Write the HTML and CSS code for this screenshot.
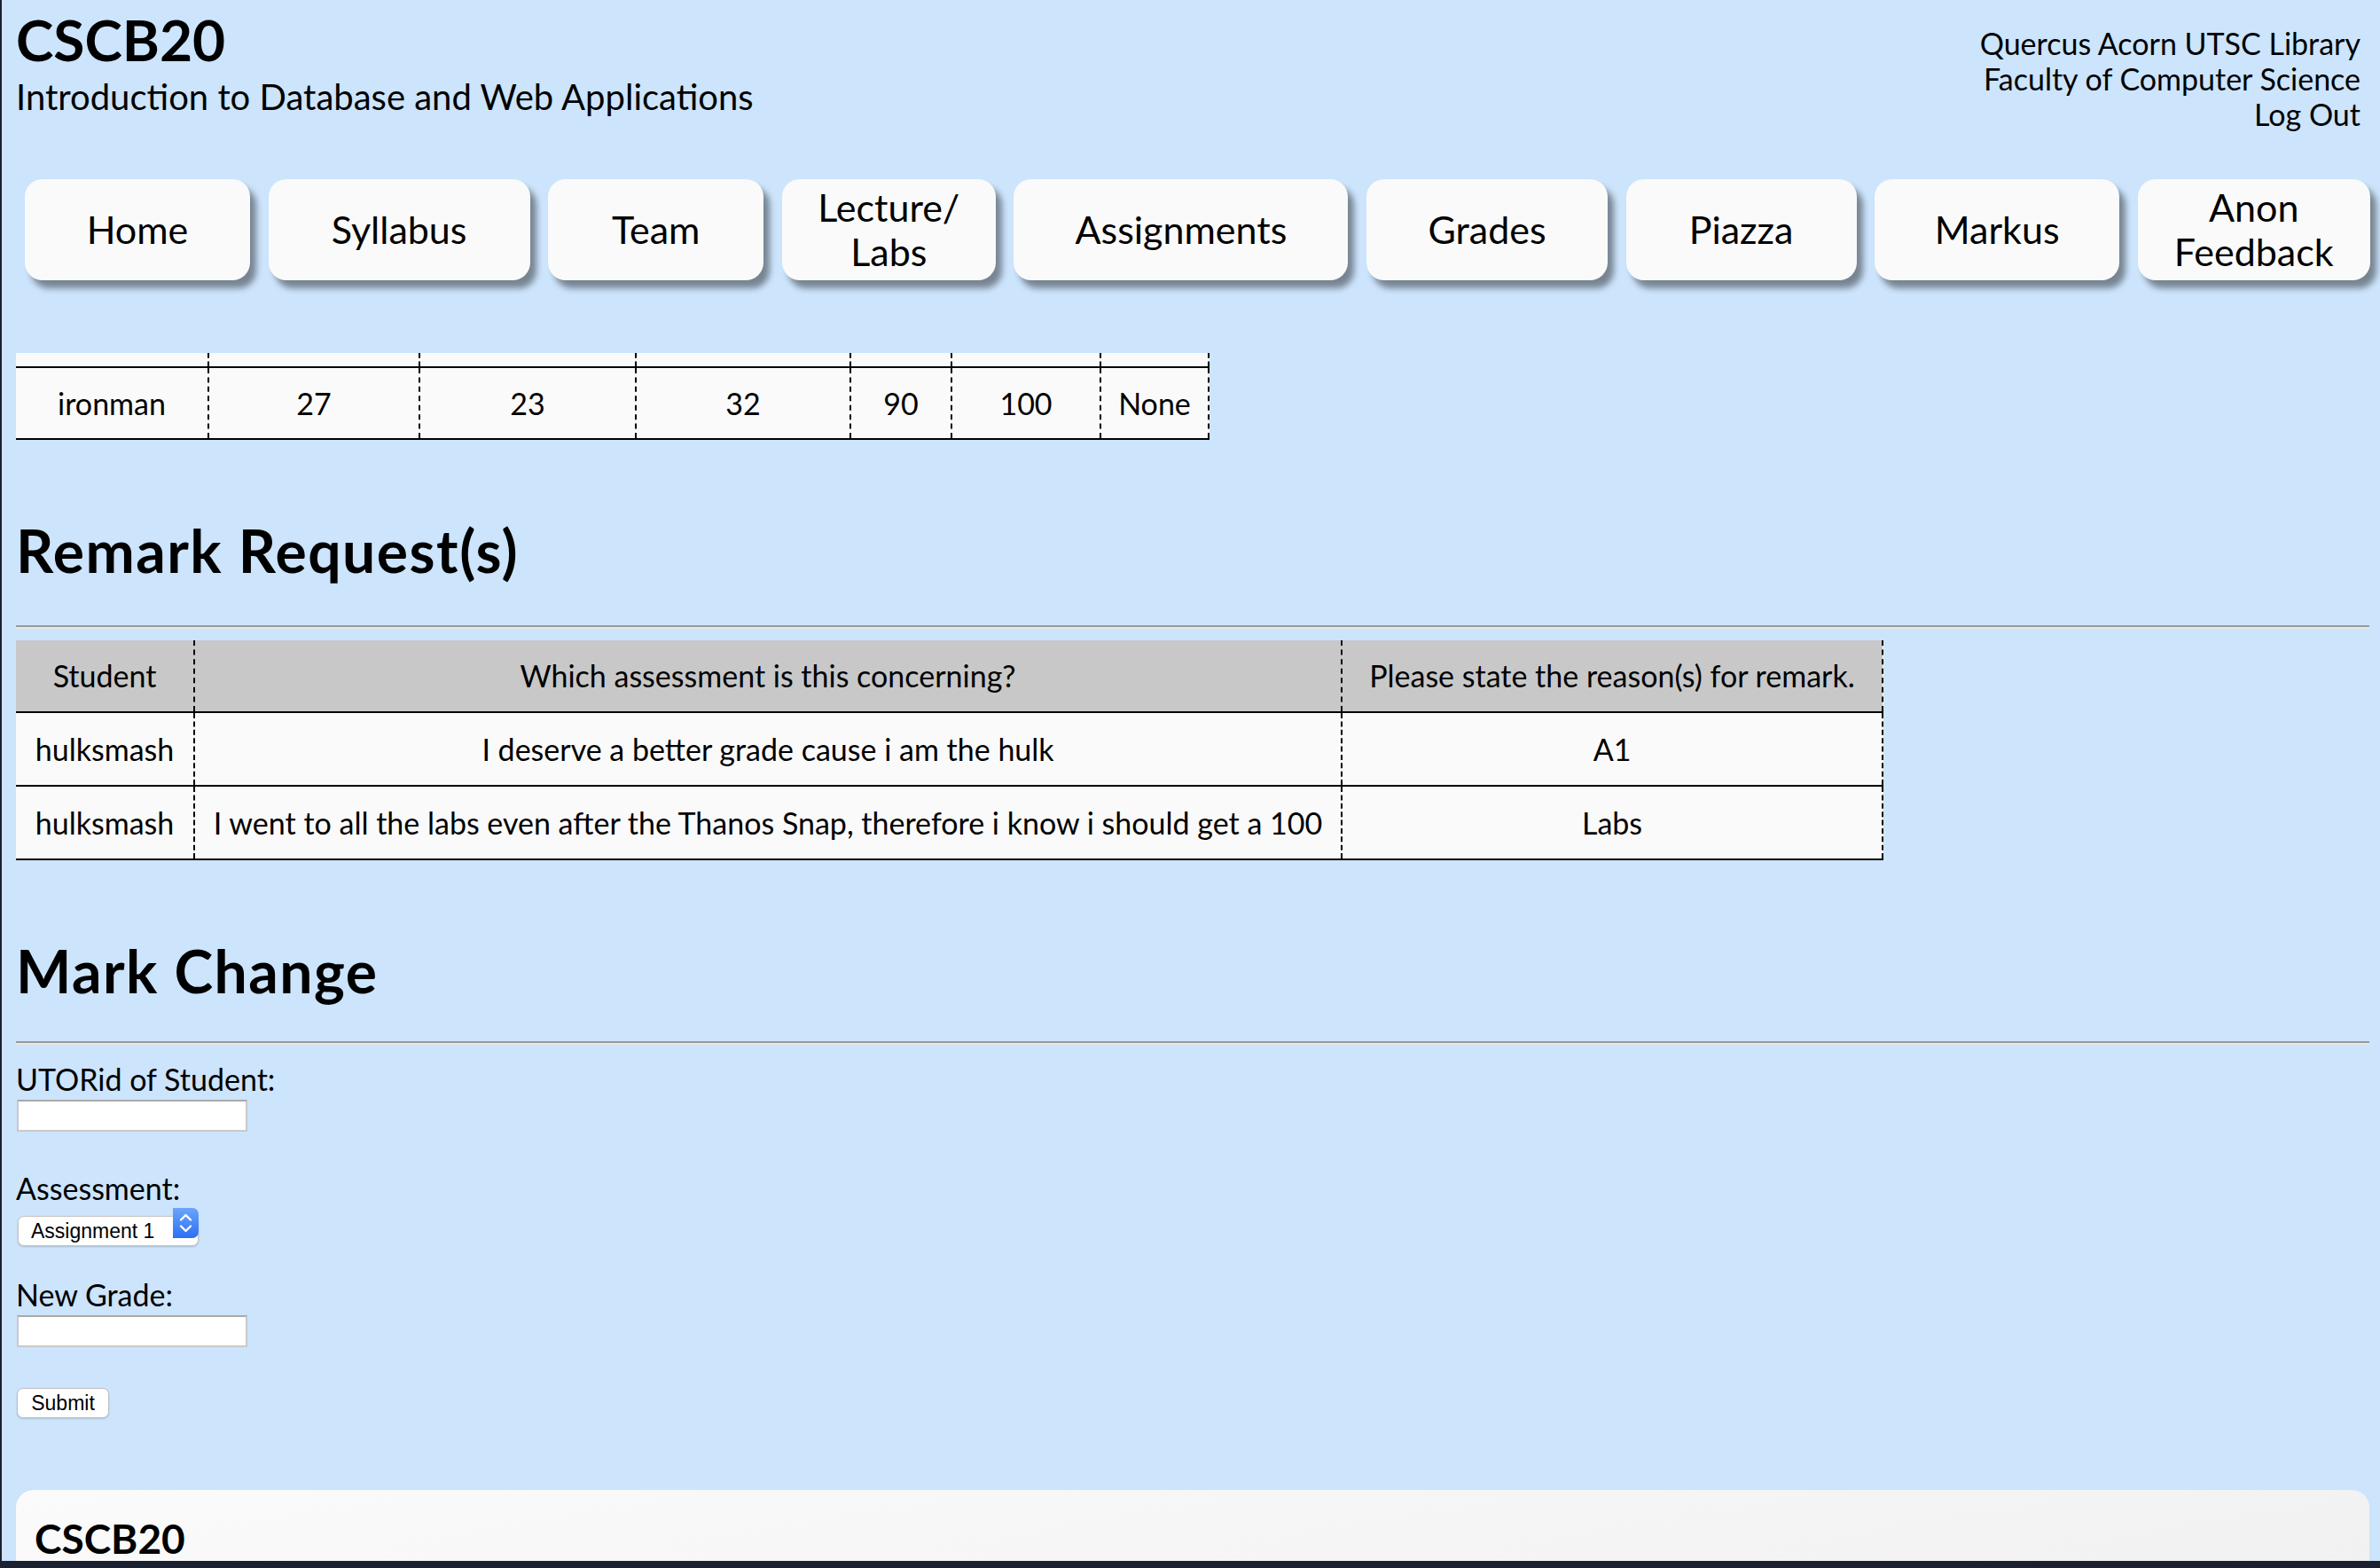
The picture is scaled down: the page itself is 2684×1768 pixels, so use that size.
FILE: index.html
```html
<!DOCTYPE html>
<html lang="en">
<head>
<meta charset="utf-8">
<title>CSCB20 - Grades</title>
<link rel="stylesheet" href="styles.css">
</head>
<body>
<div class="frame"></div>
<header class="top">
  <div class="brand">
    <h1 class="brand-title">CSCB20</h1>
    <p class="subtitle">Introduction to Database and Web Applications</p>
  </div>
  <div class="links">
    <div><a class="link" href="#">Quercus</a> <a class="link" href="#">Acorn</a> <a class="link" href="#">UTSC Library</a></div>
    <div><a class="link" href="#">Faculty of Computer Science</a></div>
    <div><a class="link" href="#">Log Out</a></div>
  </div>
</header>

<nav class="nav">
  <a class="nav-btn" href="#">Home</a>
  <a class="nav-btn" href="#">Syllabus</a>
  <a class="nav-btn" href="#">Team</a>
  <a class="nav-btn" href="#">Lecture/<br>Labs</a>
  <a class="nav-btn" href="#">Assignments</a>
  <a class="nav-btn" href="#">Grades</a>
  <a class="nav-btn" href="#">Piazza</a>
  <a class="nav-btn" href="#">Markus</a>
  <a class="nav-btn" href="#">Anon<br>Feedback</a>
</nav>

<main class="content">
  <table class="grades">
    <colgroup>
      <col class="g1"><col class="g2"><col class="g3"><col class="g4"><col class="g5"><col class="g6"><col class="g7">
    </colgroup>
    <tr class="clip-row"><td></td><td></td><td></td><td></td><td></td><td></td><td></td></tr>
    <tr class="data-row"><td>ironman</td><td>27</td><td>23</td><td>32</td><td>90</td><td>100</td><td>None</td></tr>
  </table>

  <h2 class="section-title">Remark Request(s)</h2>
  <hr class="rule">

  <table class="remarks">
    <colgroup><col class="r1"><col class="r2"><col class="r3"></colgroup>
    <tr><th>Student</th><th>Which assessment is this concerning?</th><th>Please state the reason(s) for remark.</th></tr>
    <tr><td>hulksmash</td><td>I deserve a better grade cause i am the hulk</td><td>A1</td></tr>
    <tr><td>hulksmash</td><td>I went to all the labs even after the Thanos Snap, therefore i know i should get a 100</td><td>Labs</td></tr>
  </table>

  <h2 class="section-title second">Mark Change</h2>
  <hr class="rule">

  <form class="mark-form">
    <label class="field-label" for="utorid">UTORid of Student:</label>
    <input class="text-input" id="utorid" type="text">
    <label class="field-label gap" for="assess">Assessment:</label>
    <span class="select-wrap">
      <select class="select" id="assess">
        <option>Assignment 1</option>
        <option>Assignment 2</option>
        <option>Assignment 3</option>
        <option>Labs</option>
      </select>
      <span class="stepper">
        <svg width="29" height="34" viewBox="0 0 29 34">
          <path d="M9 13.5 L14.5 8 L20 13.5" fill="none" stroke="#fff" stroke-width="2.4" stroke-linecap="round" stroke-linejoin="round"/>
          <path d="M9 20.5 L14.5 26 L20 20.5" fill="none" stroke="#fff" stroke-width="2.4" stroke-linecap="round" stroke-linejoin="round"/>
        </svg>
      </span>
    </span>
    <label class="field-label gap" for="grade">New Grade:</label>
    <input class="text-input" id="grade" type="text">
    <button class="submit" type="button">Submit</button>
  </form>
</main>

<footer class="foot">
  <h3 class="foot-title">CSCB20</h3>
</footer>
</body>
</html>
```

FILE: styles.css
```css
html {
  background: #cce4fc;
}

body {
  margin: 0;
  padding: 0 12px 0 18px;
  font-family: Lato, "Noto Sans", sans-serif;
  font-size: 34px;
  color: #000;
  background: #cce4fc;
  overflow: hidden;
}

.frame {
  position: fixed;
  left: 0;
  top: 0;
  right: 0;
  bottom: 0;
  border-left: 2px solid #1b2130;
  border-bottom: 8px solid #1b2130;
  pointer-events: none;
  z-index: 10;
}

a {
  color: #000;
  text-decoration: none;
}

/* header */
.top {
  display: flex;
  justify-content: space-between;
  align-items: flex-start;
  padding-top: 7px;
}

.brand-title {
  margin: 0;
  font-size: 64px;
  font-weight: 700;
  line-height: 1.2;
}

.subtitle {
  margin: 0;
  font-size: 40px;
  line-height: 50px;
}

.links {
  text-align: right;
  font-size: 34px;
  line-height: 40px;
  padding-top: 22px;
  margin-right: 10px;
}

/* nav */
.nav {
  display: grid;
  grid-template-columns: 254px 295px 243px 241px 377px 272px 260px 276px 262px;
  column-gap: 20.6px;
  margin: 53px 0 0 10px;
}

.nav-btn {
  height: 114px;
  background: #fafafa;
  border-radius: 20px;
  box-shadow: 7px 9px 7px rgba(0, 0, 0, 0.42);
  display: flex;
  align-items: center;
  justify-content: center;
  text-align: center;
  font-size: 43px;
  line-height: 50px;
}

/* tables */
.grades,
.remarks {
  border-collapse: collapse;
  table-layout: fixed;
  background: #fafafa;
}

.grades {
  margin-top: 82px;
  width: 1345px;
}

.g1 { width: 217px; }
.g2 { width: 238px; }
.g3 { width: 244px; }
.g4 { width: 242px; }
.g5 { width: 114px; }
.g6 { width: 168px; }
.g7 { width: 122px; }

.grades td,
.remarks td,
.remarks th {
  border-right: 2px dashed #000;
  border-bottom: 2px solid #000;
  text-align: center;
  vertical-align: middle;
  padding: 0;
  line-height: 40px;
}

.clip-row td {
  height: 15px;
}

.data-row td {
  height: 79px;
}

.section-title {
  margin: 85px 0 45px;
  font-size: 66px;
  font-weight: 700;
  letter-spacing: 1.5px;
  line-height: 1.2;
}

.section-title.second {
  margin-top: 85px;
  margin-bottom: 40px;
}

.rule {
  margin: 0;
  border: 0;
  border-top: 2px solid #9a9a9a;
  border-bottom: 2px solid #e3e9f0;
  height: 0;
}

.remarks {
  margin-top: 13px;
  width: 2105px;
}

.r1 { width: 201px; }
.r2 { width: 1294px; }
.r3 { width: 610px; }

.remarks th {
  background: #c8c8c8;
  font-weight: 400;
  height: 80px;
}

.remarks td {
  height: 81px;
}

/* form */
.mark-form {
  display: flex;
  flex-direction: column;
  align-items: flex-start;
  margin-top: 19px;
}

.field-label {
  line-height: 40px;
}

.field-label.gap {
  margin-top: 44px;
}

.text-input {
  margin: 3px 0 0 1px;
  width: 260px;
  height: 36px;
  box-sizing: border-box;
  border: 2px solid #c9c9c9;
  border-top-color: #a9a9a9;
  background: #fff;
  padding: 0 4px;
  font-size: 22px;
}

.select-wrap {
  position: relative;
  display: inline-block;
  margin: 2px 0 0 2px;
  width: 204px;
  height: 34px;
}

.select {
  appearance: none;
  -webkit-appearance: none;
  width: 204px;
  height: 34px;
  box-sizing: border-box;
  border: 1px solid #c4c4c4;
  border-radius: 7px;
  background: #fff;
  box-shadow: 0 1px 2px rgba(0, 0, 0, 0.18);
  padding: 0 0 0 14px;
  font-family: "Liberation Sans", Arial, sans-serif;
  font-size: 23px;
  color: #000;
}

.stepper {
  position: absolute;
  right: 0;
  top: 0;
  width: 29px;
  height: 34px;
  border-radius: 0 7px 7px 0;
  background: linear-gradient(#6aa6fb, #2d6ff3);
  display: flex;
}

.submit {
  margin: 46px 0 0 1px;
  width: 104px;
  height: 34px;
  border: 1px solid #bfbfbf;
  border-radius: 7px;
  background: #fff;
  box-shadow: 0 1px 2px rgba(0, 0, 0, 0.15);
  font-family: "Liberation Sans", Arial, sans-serif;
  font-size: 23px;
  color: #000;
  padding: 0;
}

/* footer */
.foot {
  margin-top: 81px;
  height: 86px;
  box-sizing: border-box;
  border-radius: 20px 20px 0 0;
  background: linear-gradient(170deg, #fbfbfb, #f1f1f1);
  padding: 27px 21px 0;
}

.foot-title {
  margin: 0;
  font-size: 46px;
  font-weight: 700;
  line-height: 1.2;
}
```
